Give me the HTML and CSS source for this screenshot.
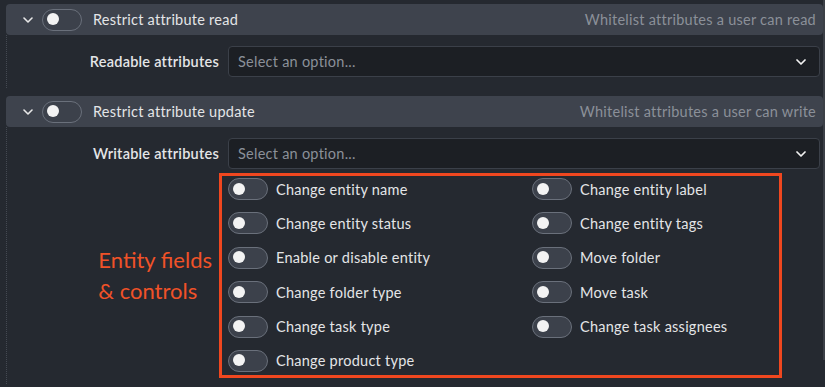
FILE: index.html
```html
<!DOCTYPE html>
<html lang="en">
<head>
  <meta charset="UTF-8" />
  <title>Access settings</title>
  <link rel="stylesheet" href="styles.css">
</head>
<body>
  <div class="page">
    <div class="panel">
      <!-- Read restriction -->
      <section class="group">
        <div class="group-head">
          <span class="chev"><svg width="10" height="6" viewBox="0 0 10 6"><path d="M1 1l4 4 4-4" fill="none" stroke="#e8e8e8" stroke-width="1.6" stroke-linecap="round" stroke-linejoin="round"/></svg></span>
          <span class="switch"></span>
          <span class="group-title">Restrict attribute read</span>
          <span class="group-hint">Whitelist attributes a user can read</span>
        </div>
        <div class="group-body">
          <div class="field">
            <label class="field-label">Readable attributes</label>
            <div class="select">
              <span>Select an option...</span>
              <svg width="10" height="6" viewBox="0 0 10 6"><path d="M1 1l4 4 4-4" fill="none" stroke="#f2f2f2" stroke-width="1.7" stroke-linecap="round" stroke-linejoin="round"/></svg>
            </div>
          </div>
        </div>
      </section>

      <!-- Update restriction -->
      <section class="group">
        <div class="group-head">
          <span class="chev"><svg width="10" height="6" viewBox="0 0 10 6"><path d="M1 1l4 4 4-4" fill="none" stroke="#e8e8e8" stroke-width="1.6" stroke-linecap="round" stroke-linejoin="round"/></svg></span>
          <span class="switch"></span>
          <span class="group-title">Restrict attribute update</span>
          <span class="group-hint">Whitelist attributes a user can write</span>
        </div>
        <div class="group-body last">
          <div class="field">
            <label class="field-label">Writable attributes</label>
            <div class="select">
              <span>Select an option...</span>
              <svg width="10" height="6" viewBox="0 0 10 6"><path d="M1 1l4 4 4-4" fill="none" stroke="#f2f2f2" stroke-width="1.7" stroke-linecap="round" stroke-linejoin="round"/></svg>
            </div>
          </div>
          <div class="field controls">
            <div class="note">Entity fields<br>&amp; controls</div>
            <div class="marked">
              <div class="toggles">
                <div class="toggle"><span class="switch"></span>Change entity name</div>
                <div class="toggle"><span class="switch"></span>Change entity label</div>
                <div class="toggle"><span class="switch"></span>Change entity status</div>
                <div class="toggle"><span class="switch"></span>Change entity tags</div>
                <div class="toggle"><span class="switch"></span>Enable or disable entity</div>
                <div class="toggle"><span class="switch"></span>Move folder</div>
                <div class="toggle"><span class="switch"></span>Change folder type</div>
                <div class="toggle"><span class="switch"></span>Move task</div>
                <div class="toggle"><span class="switch"></span>Change task type</div>
                <div class="toggle"><span class="switch"></span>Change task assignees</div>
                <div class="toggle"><span class="switch"></span>Change product type</div>
              </div>
            </div>
          </div>
        </div>
      </section>
    </div>
    <div class="scrollbar"></div>
  </div>
</body>
</html>
```

FILE: styles.css
```css
body {
  margin: 0;
  background: #252930;
  color: #e4e5e7;
  font-family: Lato, "Noto Sans", sans-serif;
  font-size: 14.5px;
  letter-spacing: 0.25px;
  overflow: hidden;
}

.page {
  display: flex;
  height: 387px;
}

.panel {
  flex: 1;
  padding: 4px 0 0 6px;
}

.scrollbar {
  width: 2px;
  height: 360px;
  background: #3b3f46;
}

.group {
  margin-bottom: 8px;
}

.group-head {
  display: flex;
  align-items: center;
  height: 31px;
  background: #3e434d;
  border-radius: 4px;
  padding: 0 7px 0 17px;
}

.chev {
  display: flex;
  width: 19px;
}

.switch {
  display: inline-block;
  position: relative;
  box-sizing: border-box;
  width: 40px;
  height: 22px;
  border: 1.5px solid #6a707b;
  border-radius: 11px;
  background: #3c414b;
  flex: none;
}

.switch::after {
  content: "";
  position: absolute;
  left: 4px;
  top: 3.5px;
  width: 12px;
  height: 12px;
  border-radius: 50%;
  background: #f3f3f3;
}

.group-title {
  margin-left: 11px;
  flex: 1;
}

.group-hint {
  color: #8b9099;
}

.group-body {
  border-left: 1px dotted #444952;
  padding: 11px 3px 11px 0;
}

.group-body.last {
  padding-bottom: 6px;
}

.field {
  display: grid;
  grid-template-columns: 212px 1fr;
  column-gap: 9px;
  align-items: center;
}

.field-label {
  text-align: right;
  font-weight: 600;
}

.select {
  display: flex;
  align-items: center;
  justify-content: space-between;
  height: 31px;
  box-sizing: border-box;
  padding: 0 13px 0 9px;
  background: #1c1f24;
  border: 1px solid #3b4049;
  border-radius: 4px;
  color: #8b9099;
}

.controls {
  margin-top: 4px;
}

.note {
  justify-self: end;
  margin-right: 7px;
  color: #f05228;
  font-size: 22px;
  letter-spacing: 0;
  line-height: 31px;
}

.marked {
  width: 551px;
  margin-left: -9px;
  border: 3px solid #f0471f;
  padding: 2px 0 3px 6px;
}

.toggles {
  display: grid;
  grid-template-columns: 304px 1fr;
  row-gap: 12.4px;
}

.toggle {
  display: flex;
  align-items: center;
  gap: 8px;
  height: 22px;
}
```
